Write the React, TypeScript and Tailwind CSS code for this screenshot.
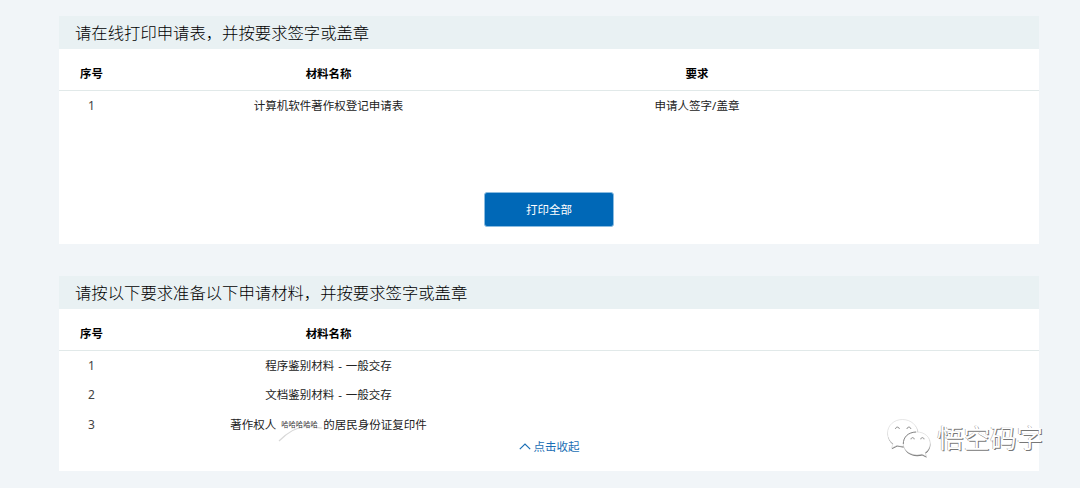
import React from "react";

type Row = { id: number; name: React.ReactNode; requirement?: string };

function Panel({ title, headers, rows, heightClass, children }: {
  title: string;
  headers: string[];
  rows: Row[];
  heightClass: string;
  children: React.ReactNode;
}) {
  return (
    <section className={`flex flex-col bg-white ${heightClass}`}>
      <h2 className="h-[33px] shrink-0 bg-[#e9f1f3] pl-4 text-[16.35px] font-light leading-[35px] text-black">{title}</h2>
      <div className="grid h-[42px] shrink-0 grid-cols-[65px_409px_328px_1fr] border-b border-[#e1e9e9] pt-2 text-center text-[11.45px] font-bold leading-[33px] text-black">
        {headers.map((h) => <span key={h}>{h}</span>)}
      </div>
      {rows.map((row) => (
        <div key={row.id} className="grid h-[29.4px] shrink-0 grid-cols-[65px_409px_328px_1fr] text-center text-[11.5px] leading-[29px] text-[#222]">
          <span className="text-[12px] text-[#444]">{row.id}</span>
          <span className="whitespace-nowrap">{row.name}</span>
          <span>{row.requirement}</span>
        </div>
      ))}
      {children}
    </section>
  );
}

function OwnerName() {
  return (
    <span className="flex justify-center">
      <span>著作权人</span>
      <span className="relative w-[48px] pl-[5px] text-left text-[7.3px] text-[#333]">
        <svg className="absolute left-[2px] top-[15px]" width="46" height="18" viewBox="0 0 46 18" fill="none">
          <path d="M1 16C11 6 19 2 28 1.500C35 1.500 40 3 44 3" stroke="#d8d8d8" strokeWidth="1.2" />
        </svg>
        <span className="relative">哈哈哈哈哈</span>
      </span>
      <span className="-ml-px">的居民身份证复印件</span>
    </span>
  );
}

function Watermark() {
  return (
    <div className="absolute left-[886px] top-[417px] flex items-start">
      <svg width="46" height="42" viewBox="0 0 46 42" className="overflow-visible">
        <g strokeLinejoin="round">
          <path d="M16.5 3C8 3 1.5 8.8 1.5 16.5c0 4.5 2 8 5.500 10.500l-1.500 4.500 5.500-2.700c2 .6 4 .9 6 .8C26 29.500 32 24 32 16.500S25 3 16.500 3Z" fill="#777" transform="translate(.3 .8)" />
          <path d="M16.500 2.500C8 2.500 1.500 8.500 1.500 16.200c0 4.500 2 8 5.500 10.500l-1.500 4.500 5.500-2.700c2 .6 4 .9 6 .8C26 29.200 32 23.500 32 16.200S25 2.500 16.500 2.500Z" fill="#fff" stroke="#ccc" strokeWidth=".5" />
          <path d="M31 15.500c-7.500 0-13.500 5-13.500 11.500S23.500 38.500 31 38.500c1.700 0 3.400-.3 5-.8l4.500 2.300-1.300-4c3.300-2.200 5-5.300 5-9 0-6.500-5.700-11.500-13.200-11.500Z" fill="#777" transform="translate(.2 .8)" />
          <path d="M31 15c-7.500 0-13.800 5-13.800 11.500S23.500 38 31 38c1.700 0 3.400-.3 5-.8l4.500 2.300-1.300-4c3.300-2.200 5-5.300 5-9C44.200 20 38.500 15 31 15Z" fill="#fff" stroke="#ccc" strokeWidth=".5" />
          <path d="M17.300 27C17.300 20 22 15.300 30 15" fill="none" stroke="#888" strokeWidth="1" />
        </g>
        <path d="M9.500 12c0-2.500 3.800-2.500 3.800 0M21 12c0-2.500 3.800-2.500 3.800 0M25 22.300c0-2.200 3.200-2.200 3.200 0M34.800 22.300c0-2.200 3.200-2.200 3.200 0" fill="none" stroke="#888" strokeWidth="1" />
      </svg>
      <span className="ml-[5px] whitespace-nowrap text-[26.5px] leading-[42px] text-white [text-shadow:1px_1px_0.5px_#777,-0.5px_0_0.5px_#999]">悟空码字</span>
    </div>
  );
}

export default function App() {
  return (
    <main className="relative h-[488px] w-[1080px] overflow-hidden bg-[#f1f5f8] pl-[59px] pr-[41px] pt-4 font-['Noto_Sans','Noto_Sans_CJK_SC',sans-serif]">
      <Panel
        title="请在线打印申请表，并按要求签字或盖章"
        headers={["序号", "材料名称", "要求"]}
        rows={[{ id: 1, name: "计算机软件著作权登记申请表", requirement: "申请人签字/盖章" }]}
        heightClass="h-[228px]"
      >
        <button className="mx-auto mt-[71.600px] h-[35px] w-[130px] rounded-[3px] border border-[#8bbce0] bg-[#0068b7] text-[11.5px] leading-[33px] text-white">打印全部</button>
      </Panel>
      <div className="h-8" />
      <Panel
        title="请按以下要求准备以下申请材料，并按要求签字或盖章"
        headers={["序号", "材料名称"]}
        rows={[
          { id: 1, name: <span className="[word-spacing:1px]">程序鉴别材料 - 一般交存</span> },
          { id: 2, name: <span className="[word-spacing:1px]">文档鉴别材料 - 一般交存</span> },
          { id: 3, name: <OwnerName /> },
        ]}
        heightClass="h-[195px]"
      >
        <button className="mx-auto flex h-4 items-center gap-[3px] text-[11.5px] leading-4 text-[#1b6fb5]">
          <svg width="12" height="7" viewBox="0 0 12 7" fill="none" className="-translate-y-px"><path d="M.8 6.200 6 1l5.200 5.200" stroke="currentColor" strokeWidth="1.200" /></svg>
          点击收起
        </button>
      </Panel>
      <Watermark />
    </main>
  );
}
